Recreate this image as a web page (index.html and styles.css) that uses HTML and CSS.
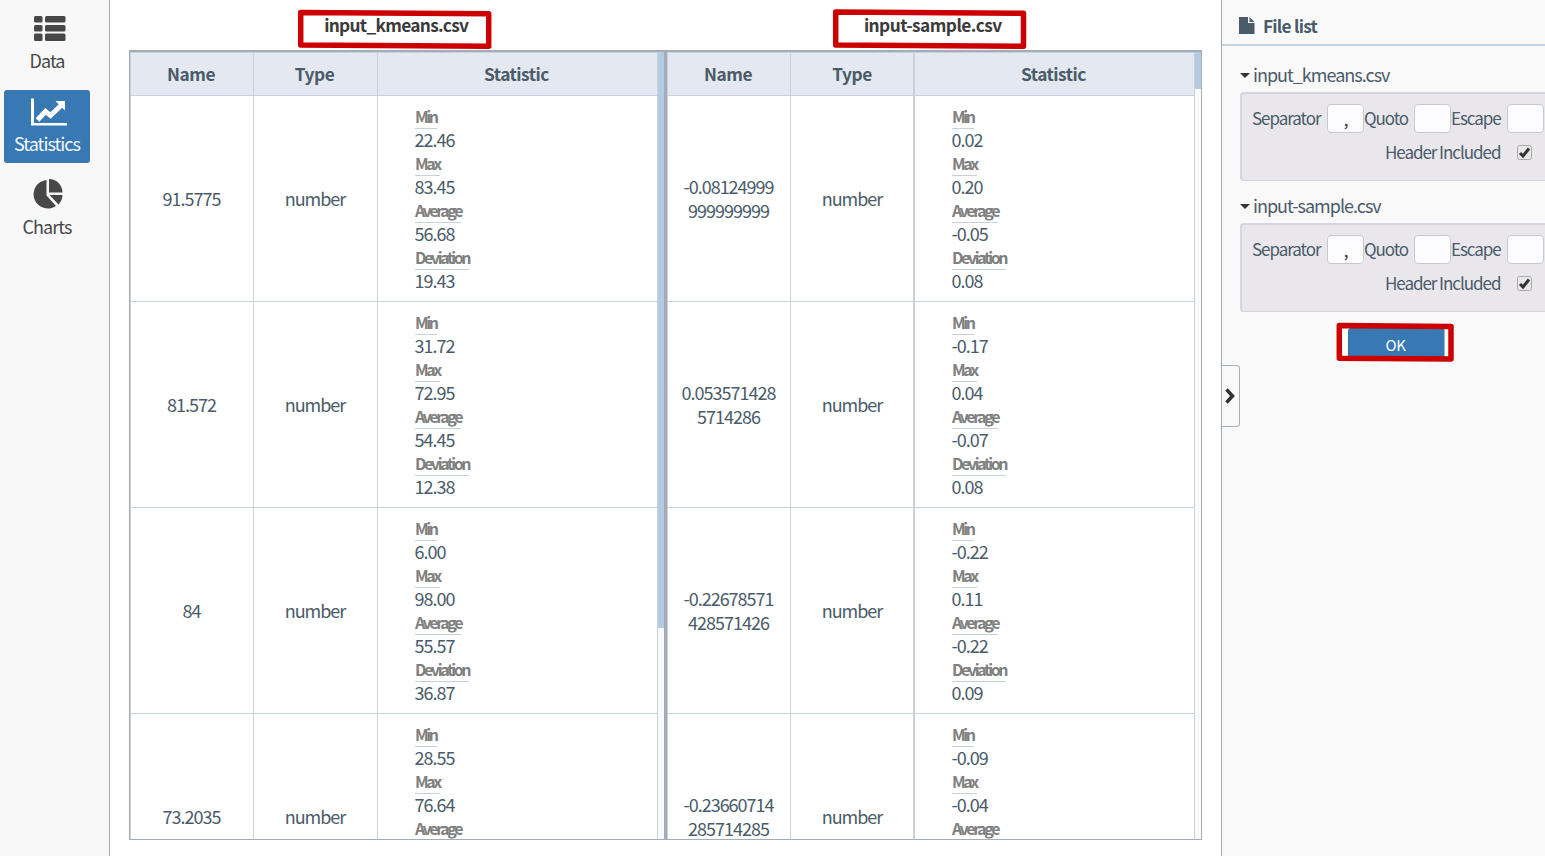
FILE: index.html
```html
<!DOCTYPE html>
<html lang="en">
<head>
<meta charset="utf-8">
<title>Statistics</title>
<link rel="stylesheet" href="styles.css">
</head>
<body>
<div class="app">
  <nav class="sidebar">
    <a class="nav-item">
      <svg class="icon" width="40" height="34" viewBox="0 0 40 34"><g fill="#474747"><rect x="7" y="7" width="8.500" height="6.500" rx="1.500"/><rect x="18" y="7" width="20.500" height="6.500" rx="1.500"/><rect x="7" y="16" width="8.500" height="6.500" rx="1.500"/><rect x="18" y="16" width="20.500" height="6.500" rx="1.500"/><rect x="7" y="24.500" width="8.500" height="7.500" rx="1.500"/><rect x="18" y="24.500" width="20.500" height="7.500" rx="1.500"/></g></svg>
      <span class="nav-label">Data</span>
    </a>
    <a class="nav-item active">
      <svg class="icon" width="40" height="34" viewBox="0 0 40 34"><path d="M4 7H7V31.500H40.500V34H4Z" transform="translate(0 -.5)" fill="#fff"/><path d="M10.500 28L18.500 19.500L23.500 23.500L34 13.500" fill="none" stroke="#fff" stroke-width="5"/><path d="M28.500 9H38V18.500Z" fill="#fff"/></svg>
      <span class="nav-label">Statistics</span>
    </a>
    <a class="nav-item">
      <svg class="icon" width="40" height="34" viewBox="0 0 40 34"><g fill="#474747" transform="translate(-1 0)"><path d="M20.500 5V20.500L30 31A14.300 14.300 0 1 1 20.500 5Z"/><path d="M23 4A13.500 13.500 0 0 1 36.500 17.500H23Z"/><path d="M23.500 20H36.500Q36.500 25 32.500 29.500Z"/></g></svg>
      <span class="nav-label">Charts</span>
    </a>
  </nav>
  <main class="main">
    <div class="titles"><div class="title t1"><span>input_kmeans.csv</span></div><div class="title t2"><span>input-sample.csv</span></div></div>
    <div class="panes" id="panes"></div>
  </main>
  <aside class="panel">
    <header class="panel-head"><svg width="16" height="17" viewBox="0 0 16 17"><path d="M0 0H9V6H15.500V17H0Z" fill="#4a5b69"/><path d="M10.500 0L15.500 5H10.500Z" fill="#4a5b69"/></svg><span>File list</span></header>
    <div class="groups" id="groups"></div>
    <button class="ok">OK</button>
    <div class="handle"><svg width="10" height="16" viewBox="0 0 10 16"><path d="M1.500 1.500L7.500 8L1.500 14.500" fill="none" stroke="#333" stroke-width="3.500"/></svg></div>
  </aside>
</div>
<svg class="marks" width="1545" height="856" viewBox="0 0 1545 856">
  <path d="M1342 328H1348V356H1342ZM1444.500 328H1448.500V356H1444.500Z" fill="#fff"/>
  <g fill="none" stroke="#cc0000" stroke-width="5.500" stroke-linejoin="round">
    <path d="M300.700 12.500L488.700 13.700V46.300L300.700 45Z"/>
    <path d="M835.700 12L1023.500 13.200V46.300L835.700 45Z"/>
    <path d="M1339.300 325.500L1451 326.400V359L1339.300 358.200Z"/>
  </g>
</svg>
<script src="app.js"></script>
</body>
</html>
```
FILE: styles.css
```css
* { box-sizing: border-box; }
body { margin: 0; background: #fff; font-family: "Noto Sans CJK SC", sans-serif; color: #4a5b69; overflow: hidden; }
.app { display: flex; width: 1545px; height: 856px; }
.sidebar { width: 110px; background: #f8f8f8; border-right: 1px solid #a2adb8; padding: 7px 0 0 4px; display: flex; flex-direction: column; gap: 10px; }
.nav-item { width: 86px; height: 73px; border-radius: 3px; display: flex; flex-direction: column; align-items: center; color: #474747; font-size: 18px; letter-spacing: -0.95px; }
.nav-item.active { background: #3879b3; color: #f2f8fd; }
.icon { margin: 2px 0 0 0; flex: none; }
.nav-label { line-height: 24px; margin-top: 5px; white-space: nowrap; }
.main { width: 1111px; padding-left: 19px; }
.titles { display: flex; height: 50px; width: 1073px; }
.title { width: 537px; text-align: center; font-weight: 700; font-size: 17.3px; letter-spacing: -0.7px; line-height: 24px; padding-top: 13px; color: #3a3a3a; }
.title.t1 { padding-right: 2px; }
.title.t2 { padding-right: 2px; letter-spacing: -0.55px; }
.panes { width: 1073px; height: 790px; border: 1px solid #a2adb8; border-top-width: 2px; display: flex; overflow: hidden; }
.pane { display: flex; }
.pane + .pane { border-left: 3px solid #a2adb8; }
.grid { width: 528px; border-top: 1px solid #c9d1db; border-left: 1px solid #c9d1db; }
.row { display: grid; grid-template-columns: 123px 124px 280px; height: 206px; }
.cell { border-right: 1px solid #c9d1db; border-bottom: 1px solid #c9d1db; display: flex; align-items: center; justify-content: center; text-align: center; line-height: 24px; font-size: 18px; letter-spacing: -1px; white-space: nowrap; padding: 0 1px 1px 0; }
.pane + .pane .cell:nth-child(2) { border-right-width: 2px; padding-right: 0; }
.head { height: 43px; }
.head .cell { background: #e4e8f0; font-weight: 700; font-size: 17.3px; letter-spacing: -0.5px; padding-bottom: 0; padding-right: 2px; }
.cell.stat { display: block; text-align: left; padding: 9px 0 0 37px; }
.label { height: 24px; line-height: 22px; width: max-content; border-bottom: 1px solid #c5d1dd; color: #808080; font-size: 16px; letter-spacing: -2.4px; font-weight: 700; }
.value { height: 23px; line-height: 20px; margin-left: -0.5px; }
.track { width: 6px; background: #f9fafd; }
.thumb { background: #b4cce1; }
.panel { width: 324px; background: #f9f9f9; border-left: 1px solid #a2adb8; position: relative; overflow: hidden; }
.panel-head { height: 46px; border-bottom: 2px solid #c5d1dd; padding: 6px 0 0 17px; display: flex; align-items: center; gap: 8px; font-size: 17.3px; letter-spacing: -0.75px; font-weight: 700; }
.groups { padding: 17px 0 0 18px; }
.file { height: 131px; }
.name { display: flex; align-items: center; gap: 3px; font-size: 18px; letter-spacing: -1px; line-height: 22px; height: 29px; padding-bottom: 6px; }
.name span { padding-bottom: 2px; }
.well { width: 330px; height: 89px; border: 2px solid #d5d5df; border-bottom-width: 1px; border-radius: 4px; background: #e9e7ec; padding: 10px 0 0 10px; font-size: 17px; letter-spacing: -1.05px; }
.fields { display: flex; align-items: center; height: 29px; line-height: 24px; white-space: nowrap; }
.fields > span:not(.box) { padding-bottom: 2px; }
.box { width: 37px; height: 29px; border: 1px solid #c5cacf; border-radius: 4px; background: #fcfcfe; color: #333; text-align: center; line-height: 27px; flex: none; }
.sep { width: 75px; } .quoto { width: 50px; } .escape { width: 56px; }
.check { display: flex; align-items: center; margin-top: 6px; height: 26px; padding-left: 133px; }
.check span { width: 132px; white-space: nowrap; padding-bottom: 1px; }
.check svg { margin-top: 1px; }
.ok { display: block; margin: 3px 0 0 126px; width: 97px; height: 30px; border: 1px solid #3071a9; border-radius: 3px; background: #3879b3; color: #fff; font: 15px "Noto Sans CJK SC", sans-serif; letter-spacing: -0.5px; line-height: 28px; padding: 2px 2px 0 0; }
.handle { position: absolute; left: 0; top: 365px; width: 18px; height: 62px; border: 1px solid #a2adb8; border-left: 0; border-radius: 0 4px 4px 0; display: flex; align-items: center; justify-content: center; padding: 0 2px 1px 0; }
.marks { position: absolute; left: 0; top: 0; pointer-events: none; }
```
FILE: app.js
```js
const panes = [
  { thumb: 576, rows: [
    ['91.5775', '22.46', '83.45', '56.68', '19.43'],
    ['81.572', '31.72', '72.95', '54.45', '12.38'],
    ['84', '6.00', '98.00', '55.57', '36.87'],
    ['73.2035', '28.55', '76.64', '', '']] },
  { thumb: 37, rows: [
    ['-0.08124999<br>999999999', '0.02', '0.20', '-0.05', '0.08'],
    ['0.053571428<br>5714286', '-0.17', '0.04', '-0.07', '0.08'],
    ['-0.22678571<br>428571426', '-0.22', '0.11', '-0.22', '0.09'],
    ['-0.23660714<br>285714285', '-0.09', '-0.04', '', '']] }
];
const labels = ['Min', 'Max', 'Average', 'Deviation'];
document.getElementById('panes').innerHTML = panes.map(p => `
  <section class="pane"><div class="grid">
    <div class="row head"><div class="cell">Name</div><div class="cell">Type</div><div class="cell">Statistic</div></div>
    ${p.rows.map(r => `<div class="row"><div class="cell"><span>${r[0]}</span></div><div class="cell"><span>number</span></div>
      <div class="cell stat">${labels.map((l, i) => (r[i + 1] || i === 2) ? `<div class="label">${l}</div><div class="value">${r[i + 1]}</div>` : '').join('')}</div></div>`).join('')}
  </div><div class="track"><div class="thumb" style="height:${p.thumb}px"></div></div></section>`).join('');
document.getElementById('groups').innerHTML = ['input_kmeans.csv', 'input-sample.csv'].map(n => `
  <div class="file"><div class="name"><svg width="10" height="6" viewBox="0 0 10 6"><path d="M0 1H10L5 6Z" fill="#333"/></svg><span>${n}</span></div>
  <div class="well"><div class="fields"><span class="sep">Separator</span><span class="box">,</span><span class="quoto">Quoto</span><span class="box">&nbsp;</span><span class="escape">Escape</span><span class="box">&nbsp;</span></div>
  <div class="check"><span>Header Included</span><svg width="15" height="15" viewBox="0 0 15 15"><rect x=".5" y=".5" width="14" height="14" rx="2" fill="#e8e8e8" stroke="#aaa"/><path d="M3 8L6 11L12 3.500" fill="none" stroke="#333" stroke-width="3"/></svg></div></div></div>`).join('');
```
